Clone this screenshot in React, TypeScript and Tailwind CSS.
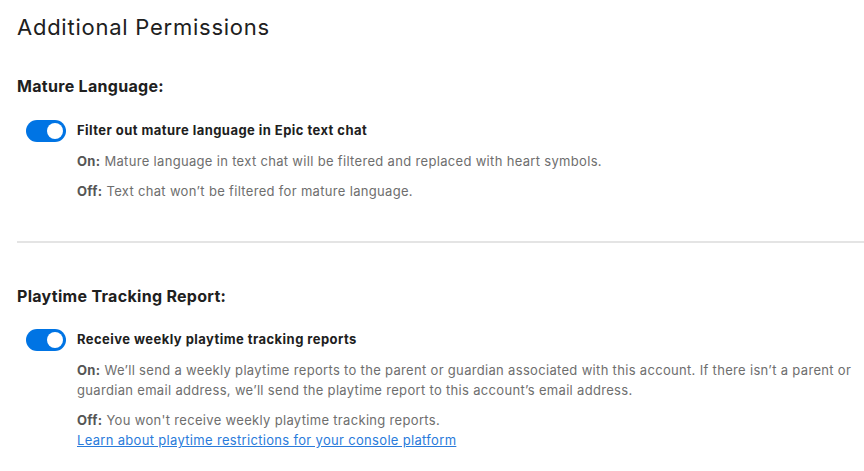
import { useState } from "react";

function Toggle({ on, onChange }: { on: boolean; onChange: () => void }) {
  return (
    <button
      type="button"
      onClick={onChange}
      className={`relative h-[22px] w-[40px] shrink-0 rounded-full transition ${
        on ? "bg-[#0074e4]" : "bg-[#bdbdbd]"
      }`}
    >
      <span
        className={`absolute top-[3px] h-[16px] w-[16px] rounded-full bg-white transition-all ${
          on ? "left-[21px]" : "left-[3px]"
        }`}
      />
    </button>
  );
}

function Setting({
  label,
  on,
  off,
  link,
}: {
  label: string;
  on: string;
  off: string;
  link?: string;
}) {
  const [enabled, setEnabled] = useState(true);
  return (
    <div className="pl-[9px]">
      <div className="flex items-center gap-[11px]">
        <Toggle on={enabled} onChange={() => setEnabled(!enabled)} />
        <span className="text-[13px] font-bold tracking-[0.45px] text-[#202020]">
          {label}
        </span>
      </div>
      <div className="pl-[51px] text-[13px] leading-[20px] tracking-[0.32px] text-[#6e6e6e]">
        <p className="mt-[9px]">
          <span className="font-bold text-[#555]">On:</span> {on}
        </p>
        <p className="mt-[10px]">
          <span className="font-bold text-[#555]">Off:</span> {off}
        </p>
        {link && (
          <a href="#" className="text-[#2a7bdb] underline">
            {link}
          </a>
        )}
      </div>
    </div>
  );
}

export default function App() {
  return (
    <div className="min-h-screen bg-white pl-[17px] pt-[13px] font-['Inter',sans-serif]">
      <h1 className="text-[22px] leading-[28px] tracking-[0.75px] text-[#202020]">
        Additional Permissions
      </h1>

      {/* ── Mature language ───────────── */}
      <h2 className="mt-[35px] text-[16px] font-bold leading-[20px] tracking-[0.3px] text-[#202020]">
        Mature Language:
      </h2>
      <div className="mt-[24px]">
        <Setting
          label="Filter out mature language in Epic text chat"
          on="Mature language in text chat will be filtered and replaced with heart symbols."
          off="Text chat won’t be filtered for mature language."
        />
      </div>

      <div className="mt-[40px] h-[2px] bg-[#e4e4e4]" />

      {/* ── Playtime tracking ─────────── */}
      <h2 className="mt-[43px] text-[16px] font-bold leading-[20px] tracking-[0.3px] text-[#202020]">
        Playtime Tracking Report:
      </h2>
      <div className="mt-[23px]">
        <Setting
          label="Receive weekly playtime tracking reports"
          on="We’ll send a weekly playtime reports to the parent or guardian associated with this account. If there isn’t a parent or guardian email address, we’ll send the playtime report to this account’s email address."
          off="You won't receive weekly playtime tracking reports."
          link="Learn about playtime restrictions for your console platform"
        />
      </div>
    </div>
  );
}
